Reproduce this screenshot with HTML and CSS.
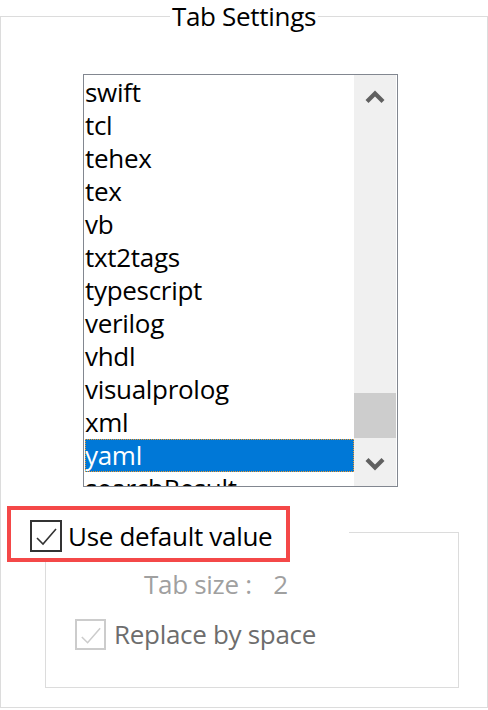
FILE: index.html
```
<!DOCTYPE html>
<html>
<head>
<meta charset="utf-8">
<link rel="stylesheet" href="styles.css">
</head>
<body>
<div class="group">
  <div class="group-title">Tab Settings</div>
  <div class="listbox">
    <ul class="items">
      <li>swift</li>
      <li>tcl</li>
      <li>tehex</li>
      <li>tex</li>
      <li>vb</li>
      <li>txt2tags</li>
      <li>typescript</li>
      <li>verilog</li>
      <li>vhdl</li>
      <li>visualprolog</li>
      <li>xml</li>
      <li class="selected">yaml</li>
      <li>searchResult</li>
    </ul>
    <div class="scrollbar">
      <div class="sb-btn">
        <svg width="20" height="16" viewBox="0 0 20 16"><polyline points="2,13.5 10,5.5 18,13.5" fill="none" stroke="#606060" stroke-width="4.2"/></svg>
      </div>
      <div class="sb-track"><div class="sb-thumb"></div></div>
      <div class="sb-btn">
        <svg width="20" height="16" viewBox="0 0 20 16"><polyline points="2,2.5 10,10.5 18,2.5" fill="none" stroke="#606060" stroke-width="4.2"/></svg>
      </div>
    </div>
  </div>
  <div class="subgroup">
    <div class="subgroup-head">
      <label class="highlight check-row">
        <span class="checkbox">
          <svg width="28" height="28" viewBox="0 0 28 28"><polyline points="5,16 11,22 24,7" fill="none" stroke="#333" stroke-width="1.6"/></svg>
        </span>
        <span class="check-label">Use default value</span>
      </label>
    </div>
    <div class="tabsize">Tab size : <span class="val">2</span></div>
    <div class="check-row replace">
      <span class="checkbox disabled">
        <svg width="28" height="28" viewBox="0 0 28 28"><polyline points="5,16 11,22 24,7" fill="none" stroke="#cccccc" stroke-width="1.6"/></svg>
      </span>
      <span class="check-label">Replace by space</span>
    </div>
  </div>
</div>
</body>
</html>
```
FILE: styles.css
```
html, body {
  margin: 0;
  padding: 0;
  background: #fff;
}
body {
  font-family: "Open Sans", "Segoe UI", sans-serif;
  font-size: 26px;
  letter-spacing: -0.3px;
  color: #000;
}
.group {
  margin-top: 16px;
  border: 1px solid #dcdcdc;
  height: 690px;
  box-sizing: content-box;
}
.group-title {
  display: table;
  margin: -17px auto 0;
  padding: 0 2px;
  background: #fff;
  line-height: 32px;
}
.listbox {
  margin: 42px 0 0 82px;
  width: 313px;
  height: 411px;
  border: 1px solid #828790;
  padding: 0;
  display: flex;
  overflow: hidden;
}
.items {
  list-style: none;
  margin: 0;
  padding: 1px 0 0 1px;
  flex: 1;
  overflow: hidden;
}
.items li {
  height: 33px;
  line-height: 33px;
  padding: 0;
  white-space: nowrap;
}
.items li.selected {
  background: #0078d7;
  color: #fff;
  outline: 1px dotted #f39a2b;
  outline-offset: -1px;
}
.scrollbar {
  width: 42px;
  margin: 0 1px 0 0;
  background: #f0f0f0;
  display: flex;
  flex-direction: column;
}
.sb-btn {
  height: 42px;
  display: flex;
  align-items: center;
  justify-content: center;
}
.sb-btn svg {
  display: block;
}
.sb-track {
  flex: 1;
  padding-top: 276px;
}
.sb-thumb {
  height: 45px;
  background: #cdcdcd;
}
.subgroup {
  position: relative;
  margin: 45px 0 0 44px;
  width: 412px;
  height: 154px;
  border: 1px solid #dcdcdc;
}
.subgroup-head {
  position: absolute;
  left: -35px;
  top: -23px;
  width: 338px;
  height: 48px;
  background: #fff;
}
.check-row {
  display: flex;
  align-items: center;
  line-height: 33px;
  white-space: nowrap;
}
.highlight {
  display: inline-flex;
  height: 48px;
  box-sizing: border-box;
  padding: 10px 14px 6px 19px;
  outline: 4px solid #f44848;
  background: #fff;
}
.checkbox {
  width: 32px;
  height: 32px;
  box-sizing: border-box;
  border: 2px solid #333;
  display: flex;
  align-items: center;
  justify-content: center;
  flex: none;
  margin-right: 6px;
}
.checkbox.disabled {
  border-color: #cccccc;
}
.checkbox svg {
  display: block;
}
.tabsize {
  margin: 35px 0 0 98px;
  line-height: 33px;
  color: #a0a0a0;
  white-space: nowrap;
}
.tabsize .val {
  margin-left: 15px;
}
.replace {
  margin: 17px 0 0 29px;
  color: #6d6d6d;
}
.replace .checkbox {
  width: 31px;
  height: 31px;
  margin-right: 8px;
}
```
